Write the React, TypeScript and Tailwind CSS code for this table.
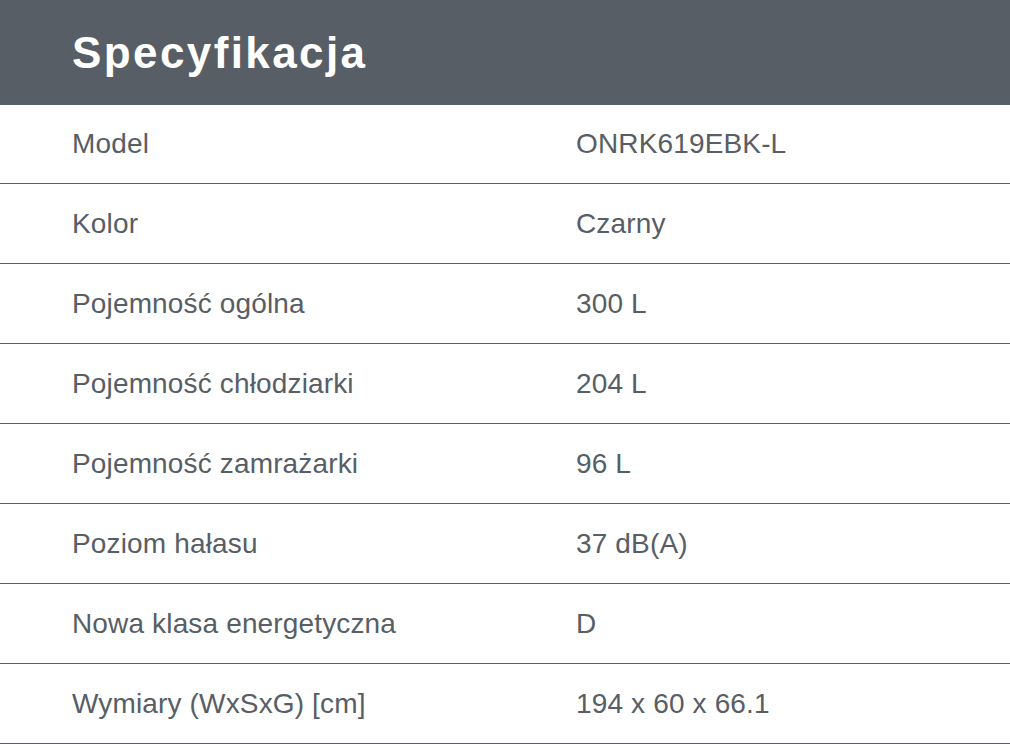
import React from "react";

const specs = [
  { label: "Model", value: "ONRK619EBK-L" },
  { label: "Kolor", value: "Czarny" },
  { label: "Pojemność ogólna", value: "300 L" },
  { label: "Pojemność chłodziarki", value: "204 L" },
  { label: "Pojemność zamrażarki", value: "96 L" },
  { label: "Poziom hałasu", value: "37 dB(A)" },
  { label: "Nowa klasa energetyczna", value: "D" },
  { label: "Wymiary (WxSxG) [cm]", value: "194 x 60 x 66.1" },
];

export default function App() {
  return (
    <div className="w-[1010px] h-[744px] bg-white font-['Liberation_Sans',Arial,sans-serif] text-[#575e65]">
      {/* Header */}
      <div className="h-[105px] bg-[#575e65] flex items-center px-[72px]">
        <h1 className="text-[44px] font-bold text-white leading-none tracking-[2.4px]">Specyfikacja</h1>
      </div>

      {/* Spec rows */}
      <div className="flex flex-col">
        {specs.map((s, i) => (
          <div
            key={s.label}
            className={`flex items-center border-b border-[#575e65] text-[28px] leading-none tracking-[0.15px] ${
              i === 0 ? "h-[79px]" : "h-[80px]"
            }`}
          >
            <div className="w-[576px] pl-[72px]">{s.label}</div>
            <div>{s.value}</div>
          </div>
        ))}
      </div>
    </div>
  );
}
